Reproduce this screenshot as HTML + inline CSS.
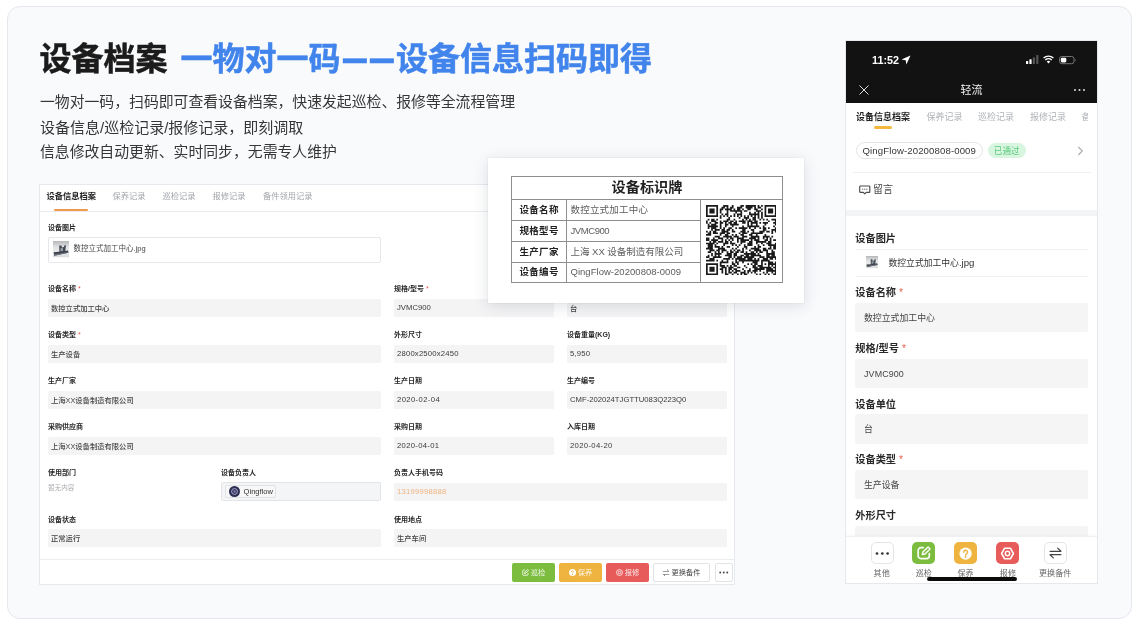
<!DOCTYPE html>
<html lang="zh-CN">
<head>
<meta charset="utf-8">
<title>设备档案</title>
<style>
*{box-sizing:border-box;margin:0;padding:0}
html,body{width:1136px;height:625px;background:#fff;overflow:hidden}
body{will-change:transform;font-family:"Liberation Sans","Noto Sans CJK SC",sans-serif;position:relative;color:#333}
.a{position:absolute;white-space:nowrap}
.card{left:7px;top:6px;width:1125px;height:613px;border:1px solid #e6e8ee;border-radius:13px;background:#f9fafc}
.t1{left:39.5px;top:34.5px;font-size:32px;line-height:48px;font-weight:700;color:#1b1b1b;-webkit-text-stroke:.5px #1b1b1b}
.t2{left:180.5px;top:34.5px;font-size:32px;line-height:48px;font-weight:700;color:#4184ec;-webkit-text-stroke:.5px #4184ec}
.sub{left:40px;font-size:14.85px;line-height:25px;color:#363636}
.ds{display:inline-block;height:10px;line-height:10px;transform:translateY(-1px) scale(.742,1.3);transform-origin:0 50%}
/* form panel */
.panel{left:39px;top:184px;width:696px;height:400.8px;background:#fff;border:1px solid #e6e9ee}
.tabline{left:40px;top:210.8px;width:694px;height:1px;background:#e9ebef}
.tab{top:189px;font-size:8.25px;line-height:16px;color:#a3a6ab}
.tab.on{color:#222;font-weight:700}
.tabu{left:54px;top:209px;width:34px;height:2px;background:#ef9a4a;border-radius:1px}
.lb{font-size:7px;line-height:12px;font-weight:700;color:#2a2a2a}
.lb i{font-style:normal;color:#e8604c;font-weight:400;margin-left:2px}
.in{height:18px;background:#f4f4f5;border-radius:1.5px;font-size:7.3px;line-height:19.2px;padding-left:3px;color:#444;font-weight:500}
.filebox{left:48px;top:237px;width:333px;height:25.6px;background:#fff;border:1px solid #e5e7eb;border-radius:2px}
.sep{left:40px;top:559px;width:694px;height:1px;background:#eceef1}
.btn{top:563px;height:18.6px;border-radius:2px;font-size:7.3px;line-height:19px;color:rgba(255,255,255,.86);text-align:center}
/* label card */
.tag{left:487.5px;top:157.8px;width:316.8px;height:145.5px;background:#fff;box-shadow:0 3px 14px rgba(60,70,90,.16),0 0 0 .5px rgba(0,0,0,.05)}
.tb{background:#8e8e8e}
.tgl{font-size:9.5px;line-height:14px;font-weight:700;color:#222;letter-spacing:.3px}
.tgv{font-size:9.5px;line-height:14px;color:#5c5c5c;letter-spacing:.2px}
/* phone */
.phone{left:845px;top:40px;width:252.8px;height:544.4px;background:#fff;overflow:hidden}
.pblack{left:846px;top:41px;width:250.8px;height:61.8px;background:#121212}
.ptab{top:108.6px;font-size:9px;line-height:16px;color:#b0b3b8}
.plb{left:855.3px;font-size:10.2px;line-height:16px;font-weight:700;color:#2a2a2a}
.plb i{font-style:normal;color:#e8604c;font-weight:400;margin-left:3px}
.pin{left:855px;width:232.5px;height:29px;background:#f5f5f6;border-radius:2px;font-size:8.9px;line-height:30.6px;padding-left:9px;color:#444}
.pbtn{top:542px;width:23px;height:22.2px;border-radius:5px}
.pbl{top:567.6px;font-size:8.1px;line-height:12px;color:#666;text-align:center;width:50px}
</style>
</head>
<body>
<div class="a card"></div>

<div class="a t1">设备档案</div>
<div class="a t2">一物对一码<span class="ds" style="margin-left:2.2px;width:27px">—</span><span class="ds" style="width:26.3px">—</span>设备信息扫码即得</div>
<div class="a sub" style="top:90px">一物对一码，扫码即可查看设备档案，快速发起巡检、报修等全流程管理</div>
<div class="a sub" style="top:115px;font-size:15px">设备信息/巡检记录/报修记录，即刻调取</div>
<div class="a sub" style="top:140px">信息修改自动更新、实时同步，无需专人维护</div>

<!-- FORM PANEL -->
<div class="a panel"></div>
<div class="a tabline"></div>
<div class="a tab on" style="left:46.5px">设备信息档案</div>
<div class="a tab" style="left:112.5px">保养记录</div>
<div class="a tab" style="left:162.5px">巡检记录</div>
<div class="a tab" style="left:212.5px">报修记录</div>
<div class="a tab" style="left:263px">备件领用记录</div>
<div class="a tabu"></div>

<div class="a lb" style="left:48px;top:221.5px">设备图片</div>
<div class="a filebox"></div>
<svg class="a" style="left:52.8px;top:241.4px" width="16.200" height="16.200" viewBox="0 0 16 16"><defs><linearGradient id="tg1" x1="0" y1="0" x2="0" y2="1"><stop offset="0" stop-color="#b4b6b8"/><stop offset=".35" stop-color="#dfe1e3"/><stop offset=".7" stop-color="#eceded"/><stop offset="1" stop-color="#d9dadb"/></linearGradient></defs>
  <rect width="16" height="16" fill="url(#tg1)"/>
  <g transform="translate(-.2 .9)"><path d="M6.300 3.500h2.200l.6 2 1.800-.400.700-1.800h1.500l-.800 6.200-5.800.700z" fill="#474d57"/>
  <path d="M7.600 6.200l2.300-.300.200 3.200-2.300.300z" fill="#9aa3ad"/>
  <path d="M.8 10.200l5.300-.400 8.900-1.200.5 2.200-14 2.800z" fill="#3b414a"/>
  <path d="M1.200 12.200l14-2.300v.9l-13.800 2.800z" fill="#6d747d"/></g></svg>
<div class="a" style="left:73.5px;top:243px;font-size:7.5px;line-height:12px;color:#444">数控立式加工中心.jpg</div>

<!-- row 1 -->
<div class="a lb" style="left:48px;top:283px">设备名称<i>*</i></div>
<div class="a in" style="left:48px;top:298.6px;width:333px">数控立式加工中心</div>
<div class="a lb" style="left:394px;top:283px">规格/型号<i>*</i></div>
<div class="a in" style="left:394px;top:298.6px;width:160px;color:#3a3a3a;line-height:18px;font-size:7.7px;letter-spacing:0.02px">JVMC900</div>
<div class="a lb" style="left:567px;top:283px">设备单位</div>
<div class="a in" style="left:567px;top:298.6px;width:160px">台</div>
<!-- row 2 -->
<div class="a lb" style="left:48px;top:329px">设备类型<i>*</i></div>
<div class="a in" style="left:48px;top:344.6px;width:333px">生产设备</div>
<div class="a lb" style="left:394px;top:329px">外形尺寸</div>
<div class="a in" style="left:394px;top:344.6px;width:160px;color:#3a3a3a;line-height:18px;font-size:7.7px;letter-spacing:0.19px">2800x2500x2450</div>
<div class="a lb" style="left:567px;top:329px">设备重量(KG)</div>
<div class="a in" style="left:567px;top:344.6px;width:160px;color:#3a3a3a;line-height:18px;font-size:7.7px;letter-spacing:0.18px">5,950</div>
<!-- row 3 -->
<div class="a lb" style="left:48px;top:375px">生产厂家</div>
<div class="a in" style="left:48px;top:390.6px;width:333px">上海XX设备制造有限公司</div>
<div class="a lb" style="left:394px;top:375px">生产日期</div>
<div class="a in" style="left:394px;top:390.6px;width:160px;color:#3a3a3a;line-height:18px;font-size:7.7px;letter-spacing:0.38px">2020-02-04</div>
<div class="a lb" style="left:567px;top:375px">生产编号</div>
<div class="a in" style="left:567px;top:390.6px;width:160px;color:#3a3a3a;line-height:18px;font-size:7.7px;letter-spacing:0.00px">CMF-202024TJGTTU083Q223Q0</div>
<!-- row 4 -->
<div class="a lb" style="left:48px;top:421px">采购供应商</div>
<div class="a in" style="left:48px;top:436.6px;width:333px">上海XX设备制造有限公司</div>
<div class="a lb" style="left:394px;top:421px">采购日期</div>
<div class="a in" style="left:394px;top:436.6px;width:160px;color:#3a3a3a;line-height:18px;font-size:7.7px;letter-spacing:0.30px">2020-04-01</div>
<div class="a lb" style="left:567px;top:421px">入库日期</div>
<div class="a in" style="left:567px;top:436.6px;width:160px;color:#3a3a3a;line-height:18px;font-size:7.7px;letter-spacing:0.34px">2020-04-20</div>
<!-- row 5 -->
<div class="a lb" style="left:48px;top:467px">使用部门</div>
<div class="a" style="left:48px;top:482px;font-size:6.6px;line-height:12px;color:#a9acb1">暂无内容</div>
<div class="a lb" style="left:221px;top:467px">设备负责人</div>
<div class="a in" style="left:221px;top:482px;width:160px;height:18.8px;border:1px solid #e2e4e8;background:#f4f5f6"></div>
<div class="a" style="left:225px;top:485.4px;width:50.8px;height:12.2px;background:#f7f7f8;border:1px solid #e0e2e6;border-radius:2px"></div>
<svg class="a" style="left:228.6px;top:486px" width="11" height="11" viewBox="0 0 11 11"><circle cx="5.500" cy="5.500" r="5.500" fill="#2c2e52"/><circle cx="5.500" cy="5.500" r="2.900" fill="none" stroke="#b9bbdc" stroke-width=".9"/><circle cx="5.500" cy="5.500" r="1.200" fill="#7d80b5"/></svg>
<div class="a" style="left:243.6px;top:485.5px;font-size:7.55px;line-height:12px;color:#333">Qingflow</div>
<div class="a lb" style="left:394px;top:467px">负责人手机号码</div>
<div class="a in" style="left:394px;top:482.6px;width:333px;color:#eeb27e;line-height:18px;font-size:7.7px;letter-spacing:0.23px">13199998888</div>
<!-- row 6 -->
<div class="a lb" style="left:48px;top:513.6px">设备状态</div>
<div class="a in" style="left:48px;top:529.4px;width:333px">正常运行</div>
<div class="a lb" style="left:394px;top:513.6px">使用地点</div>
<div class="a in" style="left:394px;top:529.4px;width:333px">生产车间</div>

<div class="a sep"></div>
<div class="a btn" style="left:512px;width:43px;background:#7cbd3f">
  <svg width="7" height="7" viewBox="0 0 14 14" style="vertical-align:-1px"><path d="M6 2H3a1.5 1.5 0 0 0-1.5 1.5v7.5A1.5 1.5 0 0 0 3 12.5h7.500a1.500 1.500 0 0 0 1.500-1.500V8M5 9l1-3 5.500-5 2 2-5.500 5z" fill="none" stroke="#fff" stroke-width="1.600" stroke-linejoin="round"/></svg> 巡检</div>
<div class="a btn" style="left:559px;width:43px;background:#efb43f">
  <svg width="7" height="7" viewBox="0 0 14 14" style="vertical-align:-1px"><circle cx="7" cy="7" r="7" fill="#fff"/><path d="M5 5.500a2 2 0 1 1 3 1.700c-.700.400-1 .800-1 1.500" fill="none" stroke="#efb43f" stroke-width="1.600"/><circle cx="7" cy="10.800" r="1" fill="#efb43f"/></svg> 保养</div>
<div class="a btn" style="left:606px;width:43px;background:#e85b5b">
  <svg width="7" height="7" viewBox="0 0 14 14" style="vertical-align:-1px"><circle cx="7" cy="7" r="6" fill="none" stroke="#fff" stroke-width="1.500"/><circle cx="7" cy="7" r="2.500" fill="none" stroke="#fff" stroke-width="1.500"/></svg> 报修</div>
<div class="a btn" style="left:653px;width:57px;background:#fff;border:1px solid #e1e3e7;color:#444;line-height:17px"><span style="font-size:7px">⇌</span> 更换备件</div>
<div class="a btn" style="left:714.7px;width:18.3px;background:#fff;border:1px solid #e1e3e7"></div>
<svg class="a" style="left:719.3px;top:571px" width="10" height="3" viewBox="0 0 10 3"><circle cx="1.200" cy="1.500" r=".95" fill="#444"/><circle cx="4.750" cy="1.500" r=".95" fill="#444"/><circle cx="8.300" cy="1.500" r=".95" fill="#444"/></svg>

<!-- LABEL CARD -->
<div class="a tag"></div>
<div class="a" style="left:511px;top:176px;width:272px;height:107px;border:1px solid #8e8e8e"></div>
<div class="a tb" style="left:511px;top:199px;width:272px;height:1px"></div>
<div class="a tb" style="left:511px;top:220px;width:190px;height:1px"></div>
<div class="a tb" style="left:511px;top:241px;width:190px;height:1px"></div>
<div class="a tb" style="left:511px;top:262px;width:190px;height:1px"></div>
<div class="a tb" style="left:566px;top:199px;width:1px;height:84px"></div>
<div class="a tb" style="left:700px;top:199px;width:1px;height:84px"></div>
<div class="a" style="left:511px;top:176.2px;width:272px;text-align:center;font-size:14.2px;line-height:22px;font-weight:700;color:#222">设备标识牌</div>
<div class="a tgl" style="left:519.5px;top:203px">设备名称</div>
<div class="a tgl" style="left:519.5px;top:224px">规格型号</div>
<div class="a tgl" style="left:519.5px;top:244.500px">生产厂家</div>
<div class="a tgl" style="left:519.5px;top:265px">设备编号</div>
<div class="a tgv" style="left:570.5px;top:203px">数控立式加工中心</div>
<div class="a tgv" style="left:570.5px;top:224px;letter-spacing:-.43px">JVMC900</div>
<div class="a tgv" style="left:570.5px;top:244.500px;letter-spacing:-.02px">上海 XX 设备制造有限公司</div>
<div class="a tgv" style="left:570.5px;top:265px;letter-spacing:.03px">QingFlow-20200808-0009</div>
<svg class="a" style="left:705.8px;top:205.2px" width="70.6" height="70.2" viewBox="0 0 41 41" preserveAspectRatio="none"><rect width="41" height="41" fill="#fff"/><path fill="#1a1a1a" d="M0 0h7v1h-7zM10 0h3v1h-3zM15 0h1v1h-1zM20 0h2v1h-2zM23 0h6v1h-6zM30 0h1v1h-1zM32 0h1v1h-1zM34 0h7v1h-7zM0 1h1v1h-1zM6 1h1v1h-1zM9 1h2v1h-2zM12 1h1v1h-1zM14 1h2v1h-2zM18 1h3v1h-3zM23 1h4v1h-4zM28 1h1v1h-1zM30 1h2v1h-2zM34 1h1v1h-1zM40 1h1v1h-1zM0 2h1v1h-1zM2 2h3v1h-3zM6 2h1v1h-1zM8 2h2v1h-2zM11 2h4v1h-4zM16 2h1v1h-1zM18 2h2v1h-2zM21 2h1v1h-1zM24 2h2v1h-2zM28 2h2v1h-2zM32 2h1v1h-1zM34 2h1v1h-1zM36 2h3v1h-3zM40 2h1v1h-1zM0 3h1v1h-1zM2 3h3v1h-3zM6 3h1v1h-1zM8 3h1v1h-1zM12 3h1v1h-1zM14 3h7v1h-7zM22 3h2v1h-2zM29 3h3v1h-3zM34 3h1v1h-1zM36 3h3v1h-3zM40 3h1v1h-1zM0 4h1v1h-1zM2 4h3v1h-3zM6 4h1v1h-1zM8 4h1v1h-1zM12 4h1v1h-1zM17 4h1v1h-1zM20 4h1v1h-1zM25 4h1v1h-1zM28 4h1v1h-1zM30 4h1v1h-1zM32 4h1v1h-1zM34 4h1v1h-1zM36 4h3v1h-3zM40 4h1v1h-1zM0 5h1v1h-1zM6 5h1v1h-1zM9 5h1v1h-1zM11 5h2v1h-2zM16 5h1v1h-1zM18 5h3v1h-3zM25 5h6v1h-6zM32 5h1v1h-1zM34 5h1v1h-1zM40 5h1v1h-1zM0 6h7v1h-7zM8 6h1v1h-1zM10 6h1v1h-1zM12 6h1v1h-1zM14 6h1v1h-1zM16 6h1v1h-1zM18 6h1v1h-1zM20 6h1v1h-1zM22 6h1v1h-1zM24 6h1v1h-1zM26 6h1v1h-1zM28 6h1v1h-1zM30 6h1v1h-1zM32 6h1v1h-1zM34 6h7v1h-7zM8 7h1v1h-1zM13 7h1v1h-1zM19 7h1v1h-1zM22 7h3v1h-3zM27 7h2v1h-2zM30 7h1v1h-1zM32 7h1v1h-1zM1 8h1v1h-1zM3 8h2v1h-2zM6 8h1v1h-1zM12 8h2v1h-2zM16 8h1v1h-1zM21 8h1v1h-1zM23 8h1v1h-1zM25 8h1v1h-1zM27 8h2v1h-2zM31 8h1v1h-1zM33 8h1v1h-1zM35 8h1v1h-1zM38 8h3v1h-3zM0 9h1v1h-1zM3 9h3v1h-3zM8 9h1v1h-1zM10 9h3v1h-3zM14 9h2v1h-2zM17 9h1v1h-1zM19 9h4v1h-4zM24 9h3v1h-3zM28 9h2v1h-2zM36 9h1v1h-1zM40 9h1v1h-1zM0 10h1v1h-1zM2 10h1v1h-1zM5 10h2v1h-2zM8 10h2v1h-2zM11 10h1v1h-1zM13 10h2v1h-2zM16 10h2v1h-2zM21 10h2v1h-2zM24 10h1v1h-1zM26 10h4v1h-4zM31 10h1v1h-1zM33 10h3v1h-3zM39 10h2v1h-2zM1 11h1v1h-1zM3 11h3v1h-3zM8 11h1v1h-1zM11 11h2v1h-2zM14 11h5v1h-5zM24 11h1v1h-1zM26 11h1v1h-1zM29 11h1v1h-1zM34 11h1v1h-1zM40 11h1v1h-1zM1 12h6v1h-6zM8 12h1v1h-1zM11 12h1v1h-1zM15 12h1v1h-1zM21 12h1v1h-1zM24 12h7v1h-7zM33 12h1v1h-1zM39 12h1v1h-1zM1 13h1v1h-1zM3 13h3v1h-3zM8 13h1v1h-1zM10 13h1v1h-1zM13 13h2v1h-2zM17 13h1v1h-1zM19 13h5v1h-5zM25 13h1v1h-1zM28 13h1v1h-1zM31 13h1v1h-1zM33 13h2v1h-2zM36 13h1v1h-1zM40 13h1v1h-1zM3 14h1v1h-1zM5 14h3v1h-3zM9 14h2v1h-2zM12 14h2v1h-2zM15 14h1v1h-1zM21 14h2v1h-2zM26 14h2v1h-2zM33 14h2v1h-2zM38 14h3v1h-3zM0 15h1v1h-1zM2 15h1v1h-1zM4 15h2v1h-2zM9 15h4v1h-4zM15 15h2v1h-2zM20 15h3v1h-3zM24 15h1v1h-1zM27 15h1v1h-1zM31 15h3v1h-3zM35 15h2v1h-2zM38 15h1v1h-1zM40 15h1v1h-1zM1 16h2v1h-2zM4 16h3v1h-3zM8 16h3v1h-3zM12 16h2v1h-2zM19 16h1v1h-1zM21 16h3v1h-3zM26 16h7v1h-7zM38 16h1v1h-1zM0 17h3v1h-3zM8 17h1v1h-1zM11 17h2v1h-2zM15 17h1v1h-1zM17 17h1v1h-1zM20 17h2v1h-2zM25 17h2v1h-2zM29 17h1v1h-1zM34 17h1v1h-1zM5 18h3v1h-3zM10 18h5v1h-5zM16 18h3v1h-3zM21 18h3v1h-3zM26 18h5v1h-5zM33 18h4v1h-4zM38 18h1v1h-1zM0 19h2v1h-2zM4 19h1v1h-1zM7 19h3v1h-3zM12 19h1v1h-1zM14 19h2v1h-2zM18 19h4v1h-4zM25 19h4v1h-4zM30 19h1v1h-1zM33 19h1v1h-1zM35 19h1v1h-1zM37 19h1v1h-1zM0 20h2v1h-2zM3 20h4v1h-4zM9 20h1v1h-1zM11 20h1v1h-1zM13 20h1v1h-1zM15 20h1v1h-1zM18 20h1v1h-1zM20 20h5v1h-5zM26 20h1v1h-1zM28 20h3v1h-3zM34 20h2v1h-2zM37 20h1v1h-1zM39 20h2v1h-2zM2 21h1v1h-1zM4 21h2v1h-2zM7 21h3v1h-3zM11 21h2v1h-2zM14 21h1v1h-1zM18 21h1v1h-1zM20 21h3v1h-3zM25 21h2v1h-2zM29 21h6v1h-6zM36 21h2v1h-2zM0 22h5v1h-5zM6 22h1v1h-1zM10 22h3v1h-3zM14 22h3v1h-3zM20 22h1v1h-1zM24 22h3v1h-3zM29 22h1v1h-1zM32 22h1v1h-1zM35 22h3v1h-3zM40 22h1v1h-1zM1 23h3v1h-3zM5 23h1v1h-1zM10 23h1v1h-1zM15 23h1v1h-1zM17 23h1v1h-1zM19 23h1v1h-1zM22 23h1v1h-1zM24 23h3v1h-3zM30 23h1v1h-1zM33 23h1v1h-1zM36 23h5v1h-5zM1 24h3v1h-3zM5 24h3v1h-3zM9 24h1v1h-1zM12 24h2v1h-2zM18 24h1v1h-1zM22 24h2v1h-2zM28 24h1v1h-1zM30 24h2v1h-2zM37 24h1v1h-1zM39 24h2v1h-2zM0 25h4v1h-4zM7 25h4v1h-4zM15 25h1v1h-1zM17 25h1v1h-1zM21 25h1v1h-1zM23 25h1v1h-1zM26 25h5v1h-5zM33 25h2v1h-2zM36 25h2v1h-2zM39 25h2v1h-2zM2 26h3v1h-3zM6 26h2v1h-2zM9 26h3v1h-3zM14 26h1v1h-1zM16 26h1v1h-1zM18 26h2v1h-2zM21 26h1v1h-1zM25 26h1v1h-1zM28 26h4v1h-4zM33 26h3v1h-3zM38 26h1v1h-1zM1 27h2v1h-2zM5 27h1v1h-1zM7 27h1v1h-1zM9 27h1v1h-1zM12 27h1v1h-1zM14 27h2v1h-2zM17 27h2v1h-2zM20 27h2v1h-2zM23 27h1v1h-1zM26 27h2v1h-2zM29 27h1v1h-1zM31 27h2v1h-2zM35 27h1v1h-1zM38 27h2v1h-2zM3 28h1v1h-1zM5 28h4v1h-4zM12 28h3v1h-3zM16 28h2v1h-2zM22 28h7v1h-7zM30 28h1v1h-1zM35 28h5v1h-5zM1 29h1v1h-1zM3 29h1v1h-1zM5 29h1v1h-1zM7 29h1v1h-1zM11 29h4v1h-4zM16 29h2v1h-2zM20 29h2v1h-2zM23 29h2v1h-2zM26 29h6v1h-6zM35 29h2v1h-2zM38 29h2v1h-2zM0 30h2v1h-2zM4 30h5v1h-5zM13 30h2v1h-2zM16 30h1v1h-1zM18 30h3v1h-3zM22 30h6v1h-6zM31 30h3v1h-3zM35 30h6v1h-6zM2 31h3v1h-3zM10 31h4v1h-4zM15 31h1v1h-1zM17 31h6v1h-6zM24 31h3v1h-3zM28 31h1v1h-1zM30 31h1v1h-1zM33 31h3v1h-3zM37 31h2v1h-2zM40 31h1v1h-1zM0 32h5v1h-5zM6 32h1v1h-1zM9 32h1v1h-1zM12 32h1v1h-1zM17 32h1v1h-1zM19 32h12v1h-12zM32 32h5v1h-5zM8 33h5v1h-5zM15 33h1v1h-1zM17 33h2v1h-2zM21 33h1v1h-1zM27 33h3v1h-3zM32 33h1v1h-1zM36 33h3v1h-3zM40 33h1v1h-1zM0 34h7v1h-7zM8 34h1v1h-1zM15 34h2v1h-2zM18 34h1v1h-1zM24 34h1v1h-1zM26 34h1v1h-1zM28 34h2v1h-2zM32 34h1v1h-1zM34 34h1v1h-1zM36 34h5v1h-5zM0 35h1v1h-1zM6 35h1v1h-1zM8 35h3v1h-3zM12 35h1v1h-1zM14 35h1v1h-1zM16 35h2v1h-2zM22 35h1v1h-1zM27 35h2v1h-2zM30 35h3v1h-3zM36 35h1v1h-1zM38 35h1v1h-1zM40 35h1v1h-1zM0 36h1v1h-1zM2 36h3v1h-3zM6 36h1v1h-1zM9 36h3v1h-3zM13 36h3v1h-3zM18 36h2v1h-2zM23 36h1v1h-1zM27 36h3v1h-3zM31 36h7v1h-7zM39 36h2v1h-2zM0 37h1v1h-1zM2 37h3v1h-3zM6 37h1v1h-1zM8 37h2v1h-2zM11 37h1v1h-1zM13 37h2v1h-2zM16 37h2v1h-2zM21 37h1v1h-1zM25 37h1v1h-1zM28 37h6v1h-6zM35 37h4v1h-4zM40 37h1v1h-1zM0 38h1v1h-1zM2 38h3v1h-3zM6 38h1v1h-1zM9 38h1v1h-1zM11 38h1v1h-1zM13 38h1v1h-1zM15 38h1v1h-1zM17 38h3v1h-3zM22 38h1v1h-1zM24 38h2v1h-2zM27 38h3v1h-3zM31 38h1v1h-1zM35 38h6v1h-6zM0 39h1v1h-1zM6 39h1v1h-1zM9 39h1v1h-1zM11 39h1v1h-1zM13 39h2v1h-2zM16 39h2v1h-2zM20 39h3v1h-3zM24 39h1v1h-1zM26 39h1v1h-1zM28 39h1v1h-1zM33 39h1v1h-1zM35 39h1v1h-1zM38 39h1v1h-1zM40 39h1v1h-1zM0 40h7v1h-7zM11 40h2v1h-2zM15 40h1v1h-1zM18 40h1v1h-1zM20 40h1v1h-1zM22 40h2v1h-2zM29 40h1v1h-1zM31 40h1v1h-1zM34 40h1v1h-1zM36 40h1v1h-1zM39 40h2v1h-2z"/></svg>

<!-- PHONE -->
<div class="a phone"><div class="a" style="left:-845px;top:-40px;width:1136px;height:625px">
  <div class="a pblack"></div>
  <div class="a" style="left:872px;top:51.5px;font-size:10.8px;line-height:16px;font-weight:700;color:#fff">11:52</div>
  <svg class="a" style="left:901px;top:54.5px" width="10" height="10" viewBox="0 0 10 10"><path d="M9.500 0.500L0.500 4.600l4.200 0.700 0.700 4.200z" fill="#fff"/></svg>
  <svg class="a" style="left:1025.5px;top:55px" width="13" height="9" viewBox="0 0 13 9"><rect x="0" y="6" width="2.200" height="3" rx=".5" fill="#fff"/><rect x="3.400" y="4.200" width="2.200" height="4.800" rx=".5" fill="#fff"/><rect x="6.800" y="2.200" width="2.200" height="6.800" rx=".5" fill="#555"/><rect x="10.200" y="0" width="2.200" height="9" rx=".5" fill="#555"/></svg>
  <svg class="a" style="left:1043px;top:55px" width="11" height="9" viewBox="0 0 11 9"><path d="M5.500 8.600L7.300 6.500a2.600 2.600 0 0 0-3.600 0z" fill="#fff"/><path d="M2.300 5a4.600 4.600 0 0 1 6.400 0M.600 3.100a7 7 0 0 1 9.800 0" fill="none" stroke="#fff" stroke-width="1.400"/></svg>
  <svg class="a" style="left:1059px;top:55.5px" width="18" height="9" viewBox="0 0 18 9"><rect x=".5" y=".5" width="14.500" height="7.200" rx="2.300" fill="none" stroke="#777" stroke-width="1"/><rect x="1.800" y="1.800" width="5.500" height="4.600" rx="1.300" fill="#fff"/><path d="M16.200 2.800v2.500c.800-.200.800-2.300 0-2.500z" fill="#777"/></svg>
  <svg class="a" style="left:859px;top:84.5px" width="10" height="10" viewBox="0 0 10 10"><path d="M.500.500l9 9M9.500.500L.500 9.500" stroke="#ddd" stroke-width="1"/></svg>
  <div class="a" style="left:845px;top:81.5px;width:253px;text-align:center;font-size:11px;line-height:16px;color:#f0f0f0">轻流</div>
  <svg class="a" style="left:1073px;top:87.5px" width="13" height="4" viewBox="0 0 13 4"><circle cx="2" cy="2" r="1" fill="#ddd"/><circle cx="6.500" cy="2" r="1" fill="#ddd"/><circle cx="11" cy="2" r="1" fill="#ddd"/></svg>

  <div class="a ptab" style="left:856px;color:#222;font-weight:700">设备信息档案</div>
  <div class="a ptab" style="left:926.5px">保养记录</div>
  <div class="a ptab" style="left:978px">巡检记录</div>
  <div class="a ptab" style="left:1030px">报修记录</div>
  <div class="a ptab" style="left:1081.5px;width:6.500px;overflow:hidden">备</div>
  <div class="a" style="left:873.8px;top:126.3px;width:18.3px;height:2.600px;border-radius:1.500px;background:#f2b93d"></div>

  <div class="a" style="left:855.5px;top:142px;width:127.500px;height:16.500px;border:1px solid #e4e5e8;border-radius:8.500px;font-size:9.6px;letter-spacing:.12px;line-height:15px;text-align:center;color:#363636">QingFlow-20200808-0009</div>
  <div class="a" style="left:988px;top:143.3px;width:37.500px;height:15px;border-radius:7.500px;background:#d7f5df;font-size:8.6px;line-height:16.2px;text-align:center;color:#5bc97d">已通过</div>
  <svg class="a" style="left:1076.5px;top:145.6px" width="7" height="10" viewBox="0 0 7 10"><path d="M1.300 1l4 4-4 4" fill="none" stroke="#aaa" stroke-width="1.100"/></svg>
  <div class="a" style="left:853px;top:172.2px;width:238px;height:1px;background:#f0f1f3"></div>

  <svg class="a" style="left:859px;top:185px" width="11.500" height="10" viewBox="0 0 11.500 10"><path d="M1.300 1h8.900a.6.6 0 0 1 .6.6v5.100a.6.600 0 0 1-.6.600H7.200L5.750 8.800 4.300 7.300H1.300a.6.600 0 0 1-.6-.6V1.600a.6.600 0 0 1 .6-.6z" fill="none" stroke="#4a4a4a" stroke-width="1.150" stroke-linejoin="round"/><circle cx="3.700" cy="4.150" r=".6" fill="#555"/><circle cx="5.750" cy="4.150" r=".6" fill="#555"/><circle cx="7.800" cy="4.150" r=".6" fill="#555"/></svg>
  <div class="a" style="left:873px;top:182.3px;font-size:10px;line-height:16px;color:#444">留言</div>
  <div class="a" style="left:845px;top:210.4px;width:253px;height:5.400px;background:#f3f4f6"></div>

  <div class="a plb" style="top:231.2px">设备图片</div>
  <div class="a" style="left:856px;top:248.700px;width:232px;height:1px;background:#f1f2f4"></div>
  <div class="a" style="left:856px;top:276px;width:232px;height:1px;background:#f1f2f4"></div>
  <svg class="a" style="left:866px;top:256.4px" width="12.200" height="12.200" viewBox="0 0 16 16"><defs><linearGradient id="tg2" x1="0" y1="0" x2="0" y2="1"><stop offset="0" stop-color="#b4b6b8"/><stop offset=".35" stop-color="#dfe1e3"/><stop offset=".7" stop-color="#eceded"/><stop offset="1" stop-color="#d9dadb"/></linearGradient></defs>
  <rect width="16" height="16" fill="url(#tg2)"/>
  <g transform="translate(-.2 .9)"><path d="M6.300 3.500h2.200l.6 2 1.800-.400.700-1.800h1.500l-.800 6.200-5.800.700z" fill="#474d57"/>
  <path d="M7.600 6.200l2.300-.300.200 3.200-2.300.300z" fill="#9aa3ad"/>
  <path d="M.8 10.200l5.300-.400 8.900-1.200.5 2.200-14 2.800z" fill="#3b414a"/>
  <path d="M1.200 12.200l14-2.300v.9l-13.800 2.800z" fill="#6d747d"/></g></svg>
  <div class="a" style="left:888.5px;top:255.1px;font-size:8.8px;line-height:16px;color:#333">数控立式加工中心<span style="font-size:9.6px">.jpg</span></div>

  <div class="a plb" style="top:285.0px">设备名称<i>*</i></div>
  <div class="a pin" style="top:302.600px">数控立式加工中心</div>
  <div class="a plb" style="top:341.4px">规格/型号<i>*</i></div>
  <div class="a pin" style="top:358.600px;letter-spacing:.14px">JVMC900</div>
  <div class="a plb" style="top:397.0px">设备单位</div>
  <div class="a pin" style="top:414.100px;height:29.500px">台</div>
  <div class="a plb" style="top:452.2px">设备类型<i>*</i></div>
  <div class="a pin" style="top:470.200px">生产设备</div>
  <div class="a plb" style="top:508.0px">外形尺寸</div>
  <div class="a pin" style="top:526.400px"></div>

  <div class="a" style="left:845px;top:535.8px;width:253px;height:49px;background:#fff;border-top:1px solid #eff0f2;box-shadow:0 -1px 3px rgba(0,0,0,.035)"></div>
  <div class="a pbtn" style="left:870.5px;background:#fff;border:1px solid #e3e5e9"></div>
  <svg class="a" style="left:874.8px;top:550.6px" width="15" height="5" viewBox="0 0 15 5"><circle cx="2" cy="2.500" r="1.350" fill="#333"/><circle cx="7.300" cy="2.500" r="1.350" fill="#333"/><circle cx="12.600" cy="2.500" r="1.350" fill="#333"/></svg>
  <div class="a pbtn" style="left:912.3px;background:#7cbd3f"></div>
  <svg class="a" style="left:916.3px;top:545.3px" width="15.500" height="15.500" viewBox="0 0 13 13"><path d="M6.200 2.200H4.200A2.400 2.400 0 0 0 1.800 4.600v4.400a2.400 2.400 0 0 0 2.400 2.400h4.600a2.400 2.400 0 0 0 2.400-2.400V7.200" fill="none" stroke="#fff" stroke-width="1.350" stroke-linecap="round"/><path d="M5.300 8l.5-2.200 4.300-4.200 1.700 1.700-4.300 4.200z" fill="none" stroke="#fff" stroke-width="1.200" stroke-linejoin="round"/></svg>
  <div class="a pbtn" style="left:954.1px;background:#efb43f"></div>
  <svg class="a" style="left:959.2px;top:546.6px" width="13.200" height="13.200" viewBox="0 0 12 12"><circle cx="6" cy="6" r="5.600" fill="#fff"/><path d="M4.300 4.700a1.750 1.750 0 1 1 2.600 1.500c-.6.350-.9.700-.9 1.300" fill="none" stroke="#efb43f" stroke-width="1.250" stroke-linecap="round"/><circle cx="6" cy="9.100" r=".8" fill="#efb43f"/></svg>
  <div class="a pbtn" style="left:996.3px;background:#e85b5b"></div>
  <svg class="a" style="left:1000.3px;top:545.6px" width="15" height="15" viewBox="0 0 13 13"><path d="M4 1.900h5l2.600 4.600L9 11.100H4L1.400 6.500z" fill="none" stroke="#fff" stroke-width="1.350" stroke-linejoin="round"/><circle cx="6.500" cy="6.500" r="1.900" fill="none" stroke="#fff" stroke-width="1.250"/></svg>
  <div class="a pbtn" style="left:1043.7px;background:#fff;border:1px solid #e3e5e9"></div>
  <svg class="a" style="left:1048.6px;top:547px" width="13" height="12" viewBox="0 0 12 11"><path d="M1 3.900h10L8 1M11 7.100H1l3 2.900" fill="none" stroke="#444" stroke-width="1.150" stroke-linejoin="round" stroke-linecap="round"/></svg>
  <div class="a pbl" style="left:856.7px">其他</div>
  <div class="a pbl" style="left:898.8px">巡检</div>
  <div class="a pbl" style="left:940.6px">保养</div>
  <div class="a pbl" style="left:982.9px">报修</div>
  <div class="a pbl" style="left:1030.2px">更换备件</div>
  <div class="a" style="left:927px;top:577px;width:89.500px;height:4px;border-radius:2px;background:#0b0b0b"></div>
</div></div>
<div class="a" style="left:845px;top:40px;width:252.8px;height:544.4px;border:1px solid #e6e8ed"></div>
</body>
</html>
